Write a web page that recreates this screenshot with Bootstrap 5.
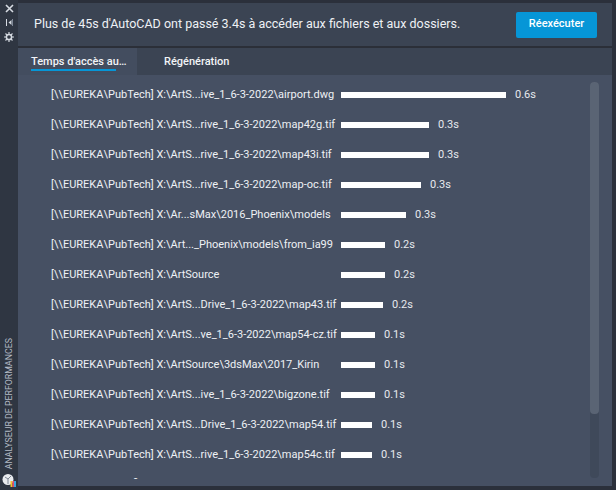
<!DOCTYPE html>
<html lang="fr">

<head>
    <meta charset="UTF-8">
    <meta name="viewport" content="width=device-width, initial-scale=1.0">
    <title>Analyseur de performances</title>
    <link href="https://cdn.jsdelivr.net/npm/bootstrap@5.3.0/dist/css/bootstrap.min.css" rel="stylesheet">
    <style>
        html, body { height: 100%; }
        body { background: #2b303b; font-family: Roboto, "Noto Sans", sans-serif; color: #f2f4f7; overflow: hidden; font-size: 11px; }
        .shell { width: 616px; height: 490px; }
        .side-strip { width: 18px; background: #2f3642; padding-top: 4px; }
        .side-strip svg { display: block; }
        .strip-gap { margin-top: 5px; }
        .side-title { writing-mode: vertical-rl; transform: rotate(180deg); font-size: 8.8px; color: #b4bbc6; white-space: nowrap; line-height: 18px; margin-bottom: 4px; }
        .side-logo { width: 14px; height: 14px; margin-bottom: 3px; }
        .main-panel { margin: 3px 4px 4px 0; background: #3b4453; min-width: 0; }
        .head-bar { height: 43px; padding: 0 15px 0 16px; border-bottom: 2px solid #2b2f38; box-sizing: content-box; }
        .head-text { font-size: 12.5px; color: #eef1f5; }
        .run-btn { background: #0696d7; color: #fff; font-size: 11px; font-weight: 500; border-radius: 2px; border: 0; width: 81px; height: 26px; padding: 0; }
        .tab-row { height: 27px; }
        .tab-item { width: 119px; height: 27px; font-size: 11px; font-weight: 500; padding: 6px 0 0 13px; color: #f2f4f7; white-space: nowrap; }
        .tab-on { background: #434d5f; position: relative; }
        .tab-on::after { content: ""; position: absolute; left: 13px; bottom: 4px; width: 85px; height: 2px; background: #0696d7; }
        .tab-off { width: 110px; padding-left: 27px; }
        .list-zone { background: #465063; height: 411px; position: relative; padding-top: 5px; }
        .list-clip { height: 399px; overflow: hidden; }
        .data-row { height: 30px; padding-left: 33px; }
        .data-row:last-child { margin-top: -1px; }
        .file-name { width: 290px; flex: none; white-space: nowrap; font-size: 11px; color: #eef1f5; }
        .time-bar { height: 6px; background: #fff; flex: none; }
        .time-val { margin-left: 9px; color: #e6e9ee; }
        .scroll-track { position: absolute; right: 13px; top: 7px; width: 9px; height: 396px; border-radius: 4px; background: #3f495a; }
        .scroll-thumb { height: 332px; border-radius: 4px; background: #5a6474; }
    </style>
</head>

<body>
    <div class="shell d-flex">
        <div class="side-strip d-flex flex-column align-items-center flex-shrink-0">
            <svg width="9" height="9" viewBox="0 0 9 9"><path d="M1 1L8 8M8 1L1 8" stroke="#d6dbe2" stroke-width="1.6"/></svg>
            <svg class="strip-gap" width="9" height="9" viewBox="0 0 9 9"><path d="M1.500 1v7" stroke="#d6dbe2" stroke-width="1"/><path d="M7.500 1v7" stroke="#7f8897" stroke-width="1"/><path d="M6.500 2L3.500 4.500 6.500 7z" fill="#d6dbe2"/></svg>
            <svg class="strip-gap" width="10" height="10" viewBox="0 0 10 10"><circle cx="5" cy="5" r="2.600" fill="none" stroke="#d6dbe2" stroke-width="1.500"/><path d="M5 0v2.400M5 7.600V10M0 5h2.400M7.600 5H10M1.500 1.500l1.800 1.800M6.700 6.700l1.800 1.800M8.500 1.500L6.700 3.300M3.300 6.700L1.500 8.500" stroke="#d6dbe2" stroke-width="1.200"/></svg>
            <div class="side-title mt-auto">ANALYSEUR DE PERFORMANCES</div>
            <svg class="side-logo" viewBox="0 0 14 14"><circle cx="6" cy="6.500" r="5.500" fill="#e9ebee"/><path d="M3 4l3 2 3-3M6 6v5" stroke="#7d8591" fill="none"/><rect x="8.500" y="8" width="2" height="6" fill="#f2c230"/><rect x="10.500" y="8" width="2" height="6" fill="#e8486a"/><rect x="12" y="8" width="2" height="6" fill="#3aa7e0"/></svg>
        </div>
        <div class="main-panel flex-grow-1 d-flex flex-column">
            <div class="head-bar d-flex align-items-center justify-content-between">
                <span class="head-text">Plus de 45s d'AutoCAD ont passé 3.4s à accéder aux fichiers et aux dossiers.</span>
                <button type="button" class="btn run-btn">Réexécuter</button>
            </div>
            <div class="tab-row d-flex">
                <div class="tab-item tab-on">Temps d'accès au…</div>
                <div class="tab-item tab-off">Régénération</div>
            </div>
            <div class="list-zone">
                <div class="list-clip" id="listClip"></div>
                <div class="scroll-track"><div class="scroll-thumb"></div></div>
            </div>
        </div>
    </div>

    <script>
        const rows = [
            ["[\\\\EUREKA\\PubTech] X:\\ArtS...ive_1_6-3-2022\\airport.dwg", 165, "0.6s"],
            ["[\\\\EUREKA\\PubTech] X:\\ArtS...rive_1_6-3-2022\\map42g.tif", 88, "0.3s"],
            ["[\\\\EUREKA\\PubTech] X:\\ArtS...rive_1_6-3-2022\\map43i.tif", 88, "0.3s"],
            ["[\\\\EUREKA\\PubTech] X:\\ArtS...rive_1_6-3-2022\\map-oc.tif", 80, "0.3s"],
            ["[\\\\EUREKA\\PubTech] X:\\Ar...sMax\\2016_Phoenix\\models", 65, "0.3s"],
            ["[\\\\EUREKA\\PubTech] X:\\Art..._Phoenix\\models\\from_ia99", 44, "0.2s"],
            ["[\\\\EUREKA\\PubTech] X:\\ArtSource", 44, "0.2s"],
            ["[\\\\EUREKA\\PubTech] X:\\ArtS...Drive_1_6-3-2022\\map43.tif", 42, "0.2s"],
            ["[\\\\EUREKA\\PubTech] X:\\ArtS...ve_1_6-3-2022\\map54-cz.tif", 34, "0.1s"],
            ["[\\\\EUREKA\\PubTech] X:\\ArtSource\\3dsMax\\2017_Kirin", 34, "0.1s"],
            ["[\\\\EUREKA\\PubTech] X:\\ArtS...ive_1_6-3-2022\\bigzone.tif", 34, "0.1s"],
            ["[\\\\EUREKA\\PubTech] X:\\ArtS...Drive_1_6-3-2022\\map54.tif", 31, "0.1s"],
            ["[\\\\EUREKA\\PubTech] X:\\ArtS...rive_1_6-3-2022\\map54c.tif", 31, "0.1s"],
            ["Fin anormale du fichier", 0, ""]
        ];
        const listClip = document.getElementById("listClip");
        rows.forEach((r) => {
            const row = document.createElement("div");
            row.className = "data-row d-flex align-items-center";
            row.innerHTML = `<div class="file-name">${r[0]}</div><div class="time-bar" style="width:${r[1]}px"></div><div class="time-val">${r[2]}</div>`;
            listClip.appendChild(row);
        });
    </script>
    <script src="https://cdn.jsdelivr.net/npm/bootstrap@5.3.0/dist/js/bootstrap.bundle.min.js"></script>
</body>

</html>
